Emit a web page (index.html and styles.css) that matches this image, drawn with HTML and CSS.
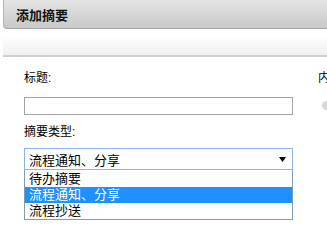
FILE: index.html
```html
<!DOCTYPE html>
<html lang="zh">
<head>
<meta charset="utf-8">
<link rel="stylesheet" href="styles.css">
</head>
<body>
<div class="header"><span class="title">添加摘要</span></div>
<div class="band"></div>
<div class="form">
  <div class="col">
    <div class="label">标题:</div>
    <div class="input"></div>
    <div class="label label2">摘要类型:</div>
    <div class="selwrap">
      <div class="select">
        <span>流程通知、分享</span>
        <svg class="arrow" width="7" height="5" viewBox="0 0 7 5"><path d="M0 0H7L3.5 5Z" fill="#000"/></svg>
      </div>
      <ul class="list">
        <li>待办摘要</li>
        <li class="sel">流程通知、分享</li>
        <li>流程抄送</li>
      </ul>
    </div>
  </div>
  <div class="side">
    <div class="label">内容:</div>
    <div class="knob"></div>
  </div>
</div>
</body>
</html>
```
FILE: styles.css
```css
html, body { margin: 0; padding: 0; background: #fff; overflow: hidden; }
body { width: 327px; height: 248px; font-family: "Liberation Sans", "Noto Sans CJK SC", sans-serif; color: #000; }
.header {
  margin-left: 3px; height: 28px;
  border-left: 1px solid #b4b4b4; border-bottom: 1px solid #a8a8a8;
  border-bottom-left-radius: 4px;
  background: linear-gradient(#e4e4e4, #c9c9c9);
  display: flex; align-items: center;
}
.title { padding-left: 12px; font-size: 13px; font-weight: bold; color: #111; }
.band {
  margin-top: 9px; margin-left: 3px; height: 17px;
  background: linear-gradient(#fdfdfd, #efefef);
  border-bottom: 2px solid #cfcfcf;
}
.form { display: flex; padding: 13px 0 0 24px; gap: 25px; }
.col { flex: none; width: 269px; display: flex; flex-direction: column; }
.label { font-size: 12px; line-height: 16px; height: 16px; }
.input { margin-top: 11px; height: 16px; border: 1px solid #a3a3a3; }
.label2 { margin-top: 9px; }
.selwrap { margin-top: 8px; position: relative; }
.select {
  height: 20px; border: 1px solid #8bb5e8; display: flex; align-items: center;
  justify-content: space-between; padding: 0 6px 0 4px; font-size: 13px;
}
.arrow { display: block; }
.list {
  position: absolute; left: 0; right: 0; top: 22px; margin: 0; padding: 1px 0 0 0;
  list-style: none; border: 1px solid #7f9db9; border-top: 0; background: #fff;
}
.list li { height: 16px; line-height: 16px; font-size: 13px; padding-left: 4px; }
.list li.sel { background: #1e90ff; color: #fff; }
.side { flex: none; white-space: nowrap; }
.knob { margin-top: 15px; margin-left: 4px; width: 9px; height: 9px; border-radius: 50%; background: #d8d8d8; }
```
